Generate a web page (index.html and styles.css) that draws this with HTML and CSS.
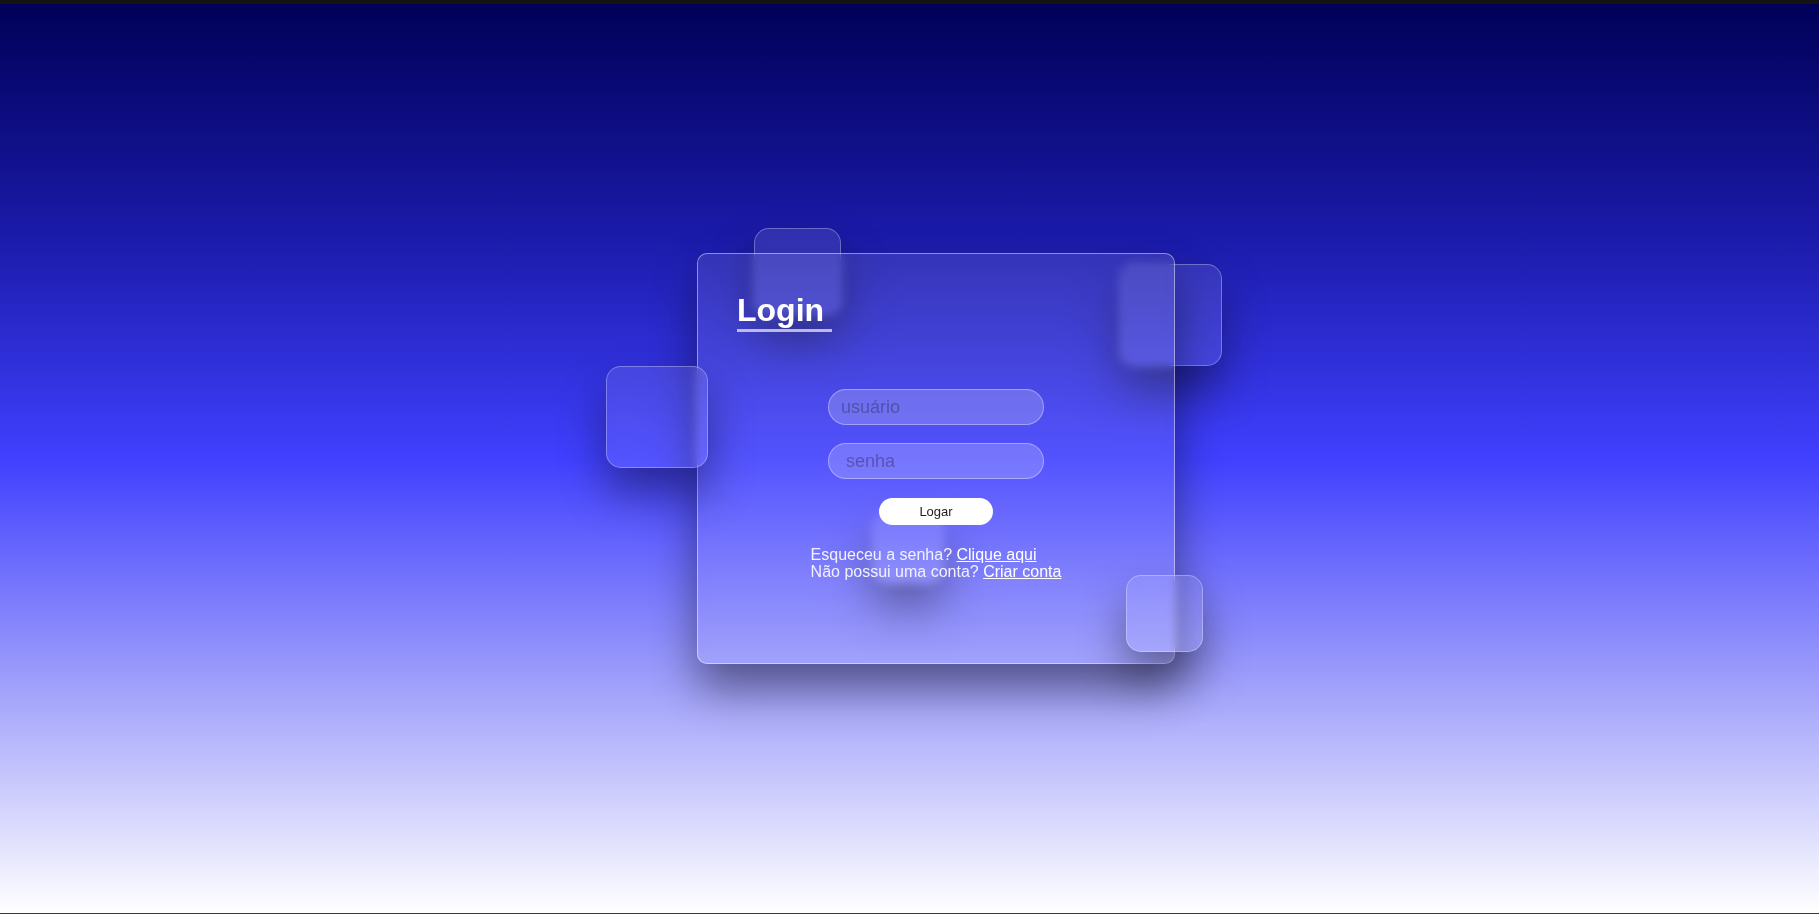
FILE: index.html
```html
<!DOCTYPE html>
<html lang="pt-BR">
<head>
<meta charset="utf-8">
<title>Login</title>
<link rel="stylesheet" href="styles.css">
</head>
<body>
<div class="topbar"></div>
<main class="stage">
  <div class="scene">
    <div class="square sq-a"></div>
    <div class="square sq-b"></div>
    <div class="square sq-e"></div>
    <section class="card">
      <h1 class="title">Login</h1>
      <form class="form">
        <input class="field" type="text" placeholder="usuário">
        <input class="field field-pass" type="password" placeholder="senha">
        <button class="btn" type="button">Logar</button>
        <div class="links">
          <p class="line">Esqueceu a senha? <a href="#">Clique aqui</a></p>
          <p class="line">Não possui uma conta? <a href="#">Criar conta</a></p>
        </div>
      </form>
    </section>
    <div class="square sq-c"></div>
    <div class="square sq-d"></div>
  </div>
</main>
<div class="bottombar"></div>
</body>
</html>
```
FILE: styles.css
```css
html, body {
  margin: 0;
  padding: 0;
}
body {
  width: 1819px;
  height: 914px;
  overflow: hidden;
  display: flex;
  flex-direction: column;
  font-family: "Liberation Sans", Arial, sans-serif;
}
.topbar {
  height: 4px;
  background: #131313;
  flex: none;
}
.bottombar {
  height: 1px;
  background: #3a3a3e;
  flex: none;
}
.stage {
  flex: 1;
  display: flex;
  align-items: center;
  justify-content: center;
  padding-left: 53px;
  background: linear-gradient(to bottom, #000058 0%, #1a1aa8 25%, #4040ff 50%, #a0a0fb 75%, #ffffff 100%);
}
.scene {
  position: relative;
  width: 478px;
  height: 411px;
}
.card {
  position: relative;
  z-index: 1;
  box-sizing: border-box;
  width: 478px;
  height: 411px;
  border-radius: 10px;
  border: 1px solid rgba(255, 255, 255, 0.45);
  background: rgba(255, 255, 255, 0.1);
  backdrop-filter: blur(5px);
  box-shadow: 0 25px 45px rgba(0, 0, 0, 0.45);
  padding: 37px 39px 0;
  display: flex;
  flex-direction: column;
  align-items: flex-start;
}
.title {
  margin: 0;
  font-size: 32px;
  font-weight: 700;
  line-height: 38px;
  color: #ffffff;
  padding-right: 8px;
  border-bottom: 3px solid rgba(255, 255, 255, 0.65);
}
.form {
  align-self: stretch;
  margin-top: 57px;
  display: flex;
  flex-direction: column;
  align-items: center;
}
.field {
  box-sizing: border-box;
  width: 216px;
  height: 36px;
  margin: 0 0 18px;
  padding: 0 12px;
  border-radius: 18px;
  border: 1px solid rgba(255, 255, 255, 0.35);
  background: rgba(255, 255, 255, 0.2);
  font-family: "Liberation Sans", Arial, sans-serif;
  font-size: 18px;
  color: #ffffff;
  outline: none;
}
.field-pass {
  padding-left: 17px;
}
.field::placeholder {
  color: rgba(40, 40, 70, 0.42);
}
.btn {
  box-sizing: border-box;
  width: 114px;
  height: 27px;
  margin: 1px 0 0;
  padding: 0;
  border: none;
  border-radius: 14px;
  background: #ffffff;
  color: #222222;
  font-family: "Liberation Sans", Arial, sans-serif;
  font-size: 13px;
}
.links {
  margin-top: 21px;
  color: #f2f2ff;
  font-size: 16px;
  line-height: 17px;
}
.line {
  margin: 0;
}
.links a {
  color: #ffffff;
  text-decoration: underline;
}
.square {
  position: absolute;
  box-sizing: border-box;
  border-radius: 15px;
  border: 1px solid rgba(255, 255, 255, 0.3);
  background: rgba(255, 255, 255, 0.1);
  backdrop-filter: blur(5px);
  box-shadow: 0 25px 45px rgba(0, 0, 0, 0.4);
}
.sq-a {
  z-index: 0;
  left: 57px;
  top: -25px;
  width: 87px;
  height: 87px;
}
.sq-b {
  z-index: 0;
  left: 423px;
  top: 11px;
  width: 102px;
  height: 102px;
}
.sq-e {
  z-index: 0;
  left: 176px;
  top: 260px;
  width: 70px;
  height: 70px;
}
.sq-c {
  z-index: 2;
  left: -91px;
  top: 113px;
  width: 102px;
  height: 102px;
}
.sq-d {
  z-index: 2;
  left: 429px;
  top: 322px;
  width: 77px;
  height: 77px;
}
```
